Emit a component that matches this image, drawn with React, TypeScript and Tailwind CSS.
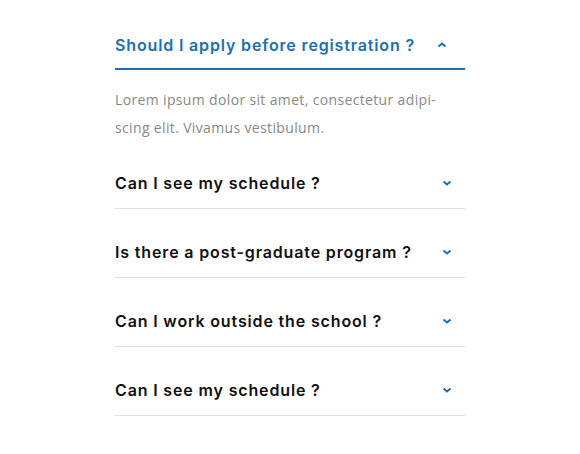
import { useState } from "react";

const items = [
  "Should I apply before registration ?",
  "Can I see my schedule ?",
  "Is there a post-graduate program ?",
  "Can I work outside the school ?",
  "Can I see my schedule ?",
];

const Chevron = ({ up }: { up?: boolean }) => (
  <svg width="10" height="6" viewBox="0 0 10 6" className={up ? "rotate-180" : ""}>
    <path d="M1.5 1.5 L5 4.5 L8.5 1.5" fill="none" stroke="#1b6fb3" strokeWidth="2" />
  </svg>
);

const App = () => {
  const [open, setOpen] = useState<number>(0);

  return (
    <div className="min-h-[454px] w-full bg-white font-['Inter',sans-serif]">
      <div className="ml-[115px] w-[350px] pt-[34px]">
        {items.map((q, i) => {
          const isOpen = open === i;
          return (
            <div key={i}>
              <button
                onClick={() => setOpen(isOpen ? -1 : i)}
                className={`flex w-full items-center justify-between text-left text-[16px] leading-[22px] font-semibold tracking-[0.85px] ${
                  isOpen
                    ? "border-b-2 border-[#1b6fb3] pb-3 text-[#1b6fb3]"
                    : "border-b border-[#e0e0e0] pb-[14px] text-[#111]"
                } ${i === 0 ? "" : i === 1 ? "pt-[30px]" : "pt-[32px]"}`}
              >
                <span>{q}</span>
                <span className={isOpen ? "mr-[18px]" : "mr-[13px]"}>
                  <Chevron up={isOpen} />
                </span>
              </button>
              {isOpen && (
                <p className="mt-4 text-[14px] leading-[28px] tracking-[0.35px] text-[#888] font-['Open_Sans',sans-serif]">
                  Lorem ipsum dolor sit amet, consectetur adipi-
                  <br />
                  scing elit. Vivamus vestibulum.
                </p>
              )}
            </div>
          );
        })}
      </div>
    </div>
  );
};

export default App;
